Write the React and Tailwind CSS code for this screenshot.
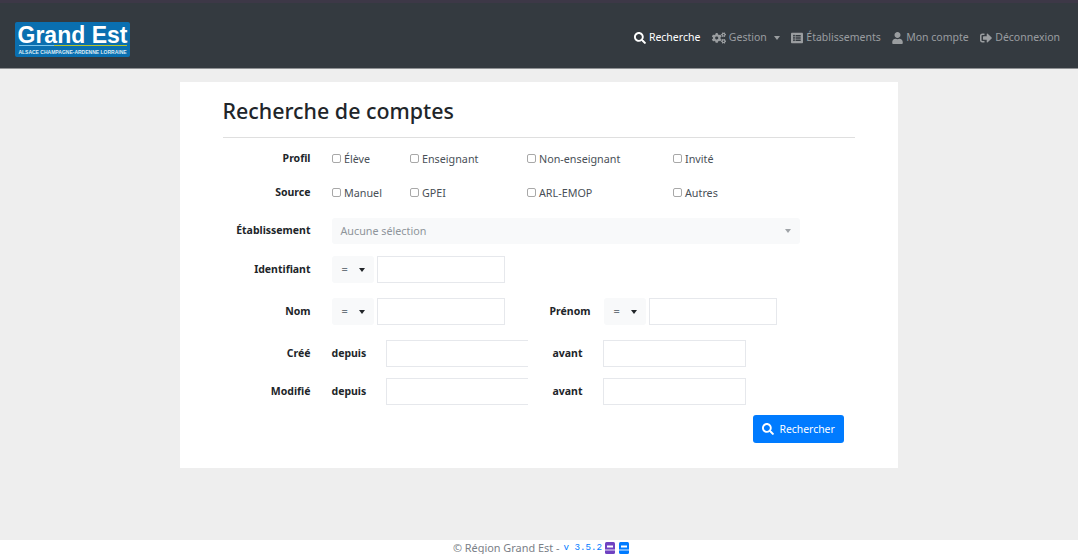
import React from "react";
import { FaSearch, FaCogs, FaListAlt, FaUser, FaSignOutAlt } from "react-icons/fa";

const Caret = ({ c = "border-t-[#212529]" }) => (
  <span className={`inline-block w-0 h-0 border-x-[3.5px] border-x-transparent border-t-[4px] ${c}`} />
);

const NavItem = ({ icon, children, active, caret }) => (
  <a className={`flex items-center gap-[3px] whitespace-nowrap ${active ? "text-white" : "text-[#9a9da0]"}`}>
    {icon}
    <span>{children}</span>
    {caret && <span className="ml-[4px] flex"><Caret c="border-t-[#9a9da0]" /></span>}
  </a>
);

const Label = ({ children }) => (
  <div className="w-[88px] shrink-0 text-right font-bold text-[10.5px] text-[#212529]">{children}</div>
);

const Check = ({ w, children }) => (
  <label className={`flex items-center gap-[3.5px] ${w}`}>
    <span className="w-[9px] h-[9px] rounded-[2px] border border-[#a8a8a8] bg-white -mt-[2px]" />
    <span>{children}</span>
  </label>
);

const Op = () => (
  <div className="w-[42px] h-[27px] rounded-[3px] bg-[#f8f9fa] flex items-center justify-between pl-[10px] pr-[9px] mr-[3px] shrink-0">
    <span className="text-[#6c757d] text-[11px]">=</span>
    <Caret />
  </div>
);

const Input = ({ w, open }) => (
  <div className={`${w} h-[27px] bg-white border border-[#e6e8ec] shrink-0 ${open ? "border-r-0" : ""}`} />
);

const Stack = ({ c }) => (
  <svg width="10" height="12" viewBox="0 0 10 12" className="shrink-0">
    <rect width="10" height="12" rx="1.5" fill={c} />
    <rect x="2" y="3.5" width="6" height="2" fill="#fff" />
    <rect x="0" y="7.5" width="10" height="1" fill="#fff" opacity="0.85" />
  </svg>
);

const Bold = ({ w, children }) => <div className={`${w} text-[10.5px] font-bold text-[#212529]`}>{children}</div>;

export default function App() {
  return (
    <div className="h-[554px] overflow-hidden bg-[#eeeeee] flex flex-col text-[#495057] text-[10.75px] font-['Noto_Sans','Open_Sans',sans-serif]">
      <header className="h-[69px] shrink-0 bg-[#343a40] border-t-[3px] border-t-[#3d3847] border-b border-b-[#8f9194] flex items-start justify-between pl-[15px] pr-[18px]">
        <div className="mt-[19px] w-[115px] h-[35px] bg-[#0a6fb0] rounded-[2px] flex flex-col items-center text-white">
          <div className="h-[21px] mt-[3px] leading-[21px] text-[23px] font-bold font-['Liberation_Sans',sans-serif] whitespace-nowrap">Grand Est</div>
          <div className="w-[108px] h-[1px] flex -mt-[1px] shrink-0">
            <div className="w-[33%] bg-[#7cc4e8]" />
            <div className="flex-1 bg-[#b5c42a]" />
          </div>
          <div className="text-[5px] leading-[9px] mt-[2px] font-bold font-['Liberation_Sans',sans-serif] whitespace-nowrap text-[#dcebf5]">ALSACE CHAMPAGNE-ARDENNE LORRAINE</div>
        </div>
        <nav className="flex items-center gap-[11.5px] text-[10.5px] h-[16px] mt-[27px]">
          <NavItem active icon={<FaSearch className="w-[12px] h-[12px]" />}>Recherche</NavItem>
          <NavItem caret icon={<FaCogs className="w-[14px] h-[12px]" />}>Gestion</NavItem>
          <NavItem icon={<FaListAlt className="w-[12px] h-[12px]" />}>Établissements</NavItem>
          <NavItem icon={<FaUser className="w-[11px] h-[12px]" />}>Mon compte</NavItem>
          <NavItem icon={<FaSignOutAlt className="w-[12px] h-[12px]" />}>Déconnexion</NavItem>
        </nav>
      </header>

      <main className="flex-1 flex flex-col items-center pt-[13px]">
        <section className="w-[718px] h-[386px] bg-white ml-[-1px] pl-[43px] pr-[43px] pt-[14px]">
          <h1 className="text-[21.4px] leading-[30px] font-medium text-[#212529] h-[41px]">Recherche de comptes</h1>
          <div className="border-t border-[#dfdfdf]" />

          <div className="flex items-center h-[16px] mt-[13px]">
            <Label>Profil</Label>
            <div className="flex ml-[21px]">
              <Check w="w-[78px]">Élève</Check>
              <Check w="w-[117px]">Enseignant</Check>
              <Check w="w-[146px]">Non-enseignant</Check>
              <Check w="w-[100px]">Invité</Check>
            </div>
          </div>
          <div className="flex items-center h-[16px] mt-[18px]">
            <Label>Source</Label>
            <div className="flex ml-[21px]">
              <Check w="w-[78px]">Manuel</Check>
              <Check w="w-[117px]">GPEI</Check>
              <Check w="w-[146px]">ARL-EMOP</Check>
              <Check w="w-[100px]">Autres</Check>
            </div>
          </div>
          <div className="flex items-center h-[26px] mt-[17px]">
            <Label>Établissement</Label>
            <div className="ml-[21px] w-[468px] h-[26px] rounded-[3px] bg-[#f8f9fa] flex items-center justify-between pl-[9px] pr-[9px] text-[#8f959b]">
              <span>Aucune sélection</span>
              <Caret c="border-t-[#a0a4a8]" />
            </div>
          </div>
          <div className="flex items-center h-[27px] mt-[12px]">
            <Label>Identifiant</Label>
            <div className="flex items-center ml-[21px]"><Op /><Input w="w-[128px]" /></div>
          </div>
          <div className="flex items-center h-[27px] mt-[15px]">
            <Label>Nom</Label>
            <div className="flex items-center ml-[21px]"><Op /><Input w="w-[128px]" /></div>
            <Bold w="w-[86px] text-right">Prénom</Bold>
            <div className="flex items-center ml-[13px]"><Op /><Input w="w-[128px]" /></div>
          </div>
          <div className="flex items-center h-[27px] mt-[15px]">
            <Label>Créé</Label>
            <Bold w="ml-[21px] w-[54px]">depuis</Bold>
            <Input w="w-[142px]" open />
            <Bold w="w-[75px] pl-[25px]">avant</Bold>
            <Input w="w-[143px]" />
          </div>
          <div className="flex items-center h-[27px] mt-[11px]">
            <Label>Modifié</Label>
            <Bold w="ml-[21px] w-[54px]">depuis</Bold>
            <Input w="w-[142px]" open />
            <Bold w="w-[75px] pl-[25px]">avant</Bold>
            <Input w="w-[143px]" />
          </div>
          <div className="flex justify-end mt-[10px] pr-[11px]">
            <button className="w-[91px] h-[28px] rounded-[3px] bg-[#007bff] text-white flex items-center gap-[6px] pl-[9px] text-[10.4px]">
              <FaSearch className="w-[12px] h-[12px]" />
              <span className="pt-[1px]">Rechercher</span>
            </button>
          </div>
        </section>
      </main>

      <footer className="h-[14px] shrink-0 bg-white flex items-start justify-center gap-[4px] pt-[2px] pl-[4px] text-[#7a8087] text-[10.9px] leading-[12px]">
        <span>© Région Grand Est -</span>
        <span className="font-['Liberation_Mono',monospace] text-[#007bff] text-[9.2px] whitespace-pre">v 3.5.2</span>
        <span className="-ml-[1px]"><Stack c="#6f42c1" /></span>
        <span><Stack c="#007bff" /></span>
      </footer>
    </div>
  );
}
